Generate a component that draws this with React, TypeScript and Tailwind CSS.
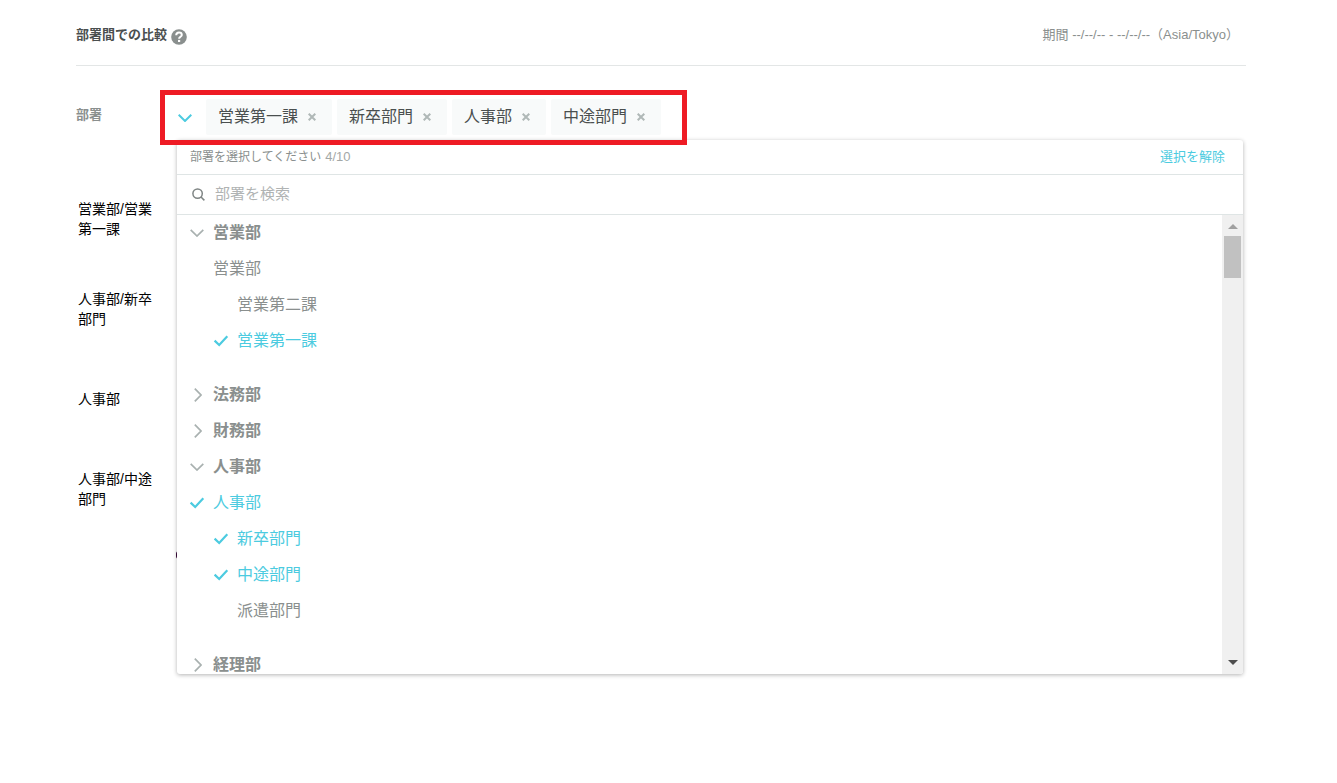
import { useState } from "react";

type Item = { name: string; depth: 0 | 1; checked?: boolean };
type Group = { name: string; open: boolean; items: Item[] };

const groups: Group[] = [
  {
    name: "営業部",
    open: true,
    items: [
      { name: "営業部", depth: 0 },
      { name: "営業第二課", depth: 1 },
      { name: "営業第一課", depth: 1, checked: true },
    ],
  },
  { name: "法務部", open: false, items: [] },
  { name: "財務部", open: false, items: [] },
  {
    name: "人事部",
    open: true,
    items: [
      { name: "人事部", depth: 0, checked: true },
      { name: "新卒部門", depth: 1, checked: true },
      { name: "中途部門", depth: 1, checked: true },
      { name: "派遣部門", depth: 1 },
    ],
  },
  { name: "経理部", open: false, items: [] },
];

const chips = ["営業第一課", "新卒部門", "人事部", "中途部門"];

function ChevronDown({ className }: { className: string }) {
  return (
    <svg viewBox="0 0 14 8" className={className} fill="none" stroke="currentColor" aria-hidden="true">
      <path d="M0.7 0.8 L7 7 L13.3 0.8" />
    </svg>
  );
}

function ChevronRight() {
  return (
    <svg viewBox="0 0 8 14" className="h-[14px] w-2" fill="none" stroke="currentColor" strokeWidth="1.7" aria-hidden="true">
      <path d="M0.8 0.7 L7 7 L0.8 13.3" />
    </svg>
  );
}

function Chip({ name }: { name: string }) {
  return (
    <li className="flex h-9 items-center gap-[10px] rounded-xs bg-[#f8fafa] pr-4 pl-3 text-base text-[#4a4f4f]">
      {name}
      <button type="button" aria-label={`${name}を削除`} className="text-[#b0b8b7]">
        <svg viewBox="0 0 8 8" className="size-2" fill="none" stroke="currentColor" strokeWidth="2" aria-hidden="true">
          <path d="M0.7 0.7 L7.3 7.3 M7.3 0.7 L0.7 7.3" />
        </svg>
      </button>
    </li>
  );
}

function ItemRow({ item }: { item: Item }) {
  const [checked, setChecked] = useState(Boolean(item.checked));
  return (
    <label
      className={`flex h-9 cursor-pointer items-center text-base ${item.depth ? "pl-9" : "pl-3"} ${
        checked ? "text-[#4ccbe0]" : "text-[#8a8f8e]"
      }`}
    >
      <input
        type="checkbox"
        className="sr-only"
        checked={checked}
        onChange={(e) => setChecked(e.target.checked)}
      />
      <span className="flex w-6 items-center">
        {checked && (
          <svg viewBox="0 0 16 12" className="h-3 w-4" fill="none" stroke="currentColor" strokeWidth="2.2" aria-hidden="true">
            <path d="M1.6 5.6 L6.2 10 L14.3 1.3" />
          </svg>
        )}
      </span>
      {item.name}
    </label>
  );
}

function GroupSection({ group }: { group: Group }) {
  const [open, setOpen] = useState(group.open);
  return (
    <li className={open && group.items.length ? "pb-[18px]" : ""}>
      <button
        type="button"
        aria-expanded={open}
        onClick={() => setOpen(!open)}
        className="flex h-9 w-full items-center pl-[13px] text-left text-base font-bold text-[#8a8f8e]"
      >
        <span className="flex w-[23px] justify-start text-[#a9b1b0]">
          {open ? (
            <ChevronDown className="h-2 w-[14px] stroke-[1.7]" />
          ) : (
            <span className="pl-1">
              <ChevronRight />
            </span>
          )}
        </span>
        {group.name}
      </button>
      {open && group.items.map((item) => <ItemRow key={item.name} item={item} />)}
    </li>
  );
}

export default function App() {
  return (
    <main
      lang="ja"
      className="min-h-screen bg-white pr-[91px] pl-[76px] font-['Liberation_Sans','Noto_Sans_CJK_JP',sans-serif] text-[#8a8f8e]"
    >
      <header className="flex h-[66px] items-center justify-between border-b border-[#e3e6e6] pt-1 pr-[7px]">
        <div className="flex items-center gap-1">
          <h1 className="text-[13px] leading-5 font-bold text-[#4a4f4f]">部署間での比較</h1>
          <button type="button" aria-label="ヘルプ" className="pt-1">
            <svg viewBox="0 0 16 16" className="size-4" aria-hidden="true">
              <circle cx="8" cy="8" r="7.8" fill="#8a8f8e" />
              <path d="M5.2 6.3 C5.3 4.4 6.5 3.5 8 3.5 C9.7 3.5 10.8 4.5 10.8 5.9 C10.8 7.7 8.1 7.8 8.1 9.7" fill="none" stroke="#fff" strokeWidth="2" />
              <rect x="7" y="10.9" width="2.2" height="2.1" fill="#fff" />
            </svg>
          </button>
        </div>
        <p className="text-[13px] leading-5">期間 --/--/-- - --/--/--（Asia/Tokyo）</p>
      </header>

      <div className="grid grid-cols-[101px_1fr] pt-6 pr-[3px]">
        <div className="pt-[15px] text-[13px] leading-5 font-bold">部署</div>
        <div className="relative flex h-[50px] items-center pt-1">
          <button type="button" aria-label="部署の一覧を開閉" className="flex w-[29px] pt-[2px] pl-px text-[#4ccbe0]">
            <ChevronDown className="h-2 w-[14px] stroke-2" />
          </button>
          <ul className="flex gap-[5px]">
            {chips.map((name) => (
              <Chip key={name} name={name} />
            ))}
          </ul>
          <div className="pointer-events-none absolute top-0 -left-[17px] z-10 h-[55px] w-[527px] border-5 border-[#ee1b24]" />
        </div>

        <ul className="flex w-[80px] flex-col pt-[59px] pl-[2px] text-[14px] leading-5 text-black">
          <li className="h-[90px]">営業部/営業第一課</li>
          <li className="h-[100px]">人事部/新卒部門</li>
          <li className="h-20">人事部</li>
          <li>人事部/中途部門</li>
        </ul>

        <div className="relative">
          <span className="absolute top-[411px] -left-px h-2 w-[6px] rounded-full bg-[#3a0a3a]" />
          <section className="relative overflow-hidden rounded-[3px] bg-white shadow-[0_1px_4px_rgba(0,0,0,0.3)]">
            <div className="flex h-[35px] items-center justify-between border-b border-[#dfe5e5] pr-[18px] pl-[13px]">
              <p className="flex items-center gap-1 text-[13px]">
                <span className="text-[12px]">部署を選択してください</span>
                <span className="text-[#a3a8a7]">4/10</span>
              </p>
              <button type="button" className="text-[13px] text-[#4ccbe0]">
                選択を解除
              </button>
            </div>
            <label className="flex h-10 items-center gap-[10px] border-b border-[#dfe5e5] pl-[15px]">
              <svg viewBox="0 0 13 13" className="size-[13px]" fill="none" stroke="#7f8584" strokeWidth="1.5" aria-hidden="true">
                <circle cx="5.6" cy="5.6" r="4.7" />
                <path d="M9 9 L12.4 12.4" />
              </svg>
              <input
                type="search"
                aria-label="部署を検索"
                placeholder="部署を検索"
                className="min-w-0 flex-1 text-[15px] outline-none placeholder:text-[#b0b3b3]"
              />
            </label>
            <div className="flex max-h-[459px]">
              <ul className="flex-1 [scrollbar-width:none] overflow-y-auto">
                {groups.map((group) => (
                  <GroupSection key={group.name} group={group} />
                ))}
              </ul>
              <div className="flex w-[21px] flex-col items-center bg-[#f0f0f0] pt-[9px] pb-[9px]" aria-hidden="true">
                <svg viewBox="0 0 10 5" className="h-[5px] w-[10px] shrink-0" fill="#a0a0a0">
                  <path d="M5 0 L10 5 H0 Z" />
                </svg>
                <div className="mt-[7px] h-[42px] w-[17px] bg-[#c1c1c1]" />
                <svg viewBox="0 0 10 5" className="mt-auto h-[5px] w-[10px] shrink-0" fill="#4d4d4d">
                  <path d="M0 0 H10 L5 5 Z" />
                </svg>
              </div>
            </div>
          </section>
        </div>
      </div>
    </main>
  );
}
